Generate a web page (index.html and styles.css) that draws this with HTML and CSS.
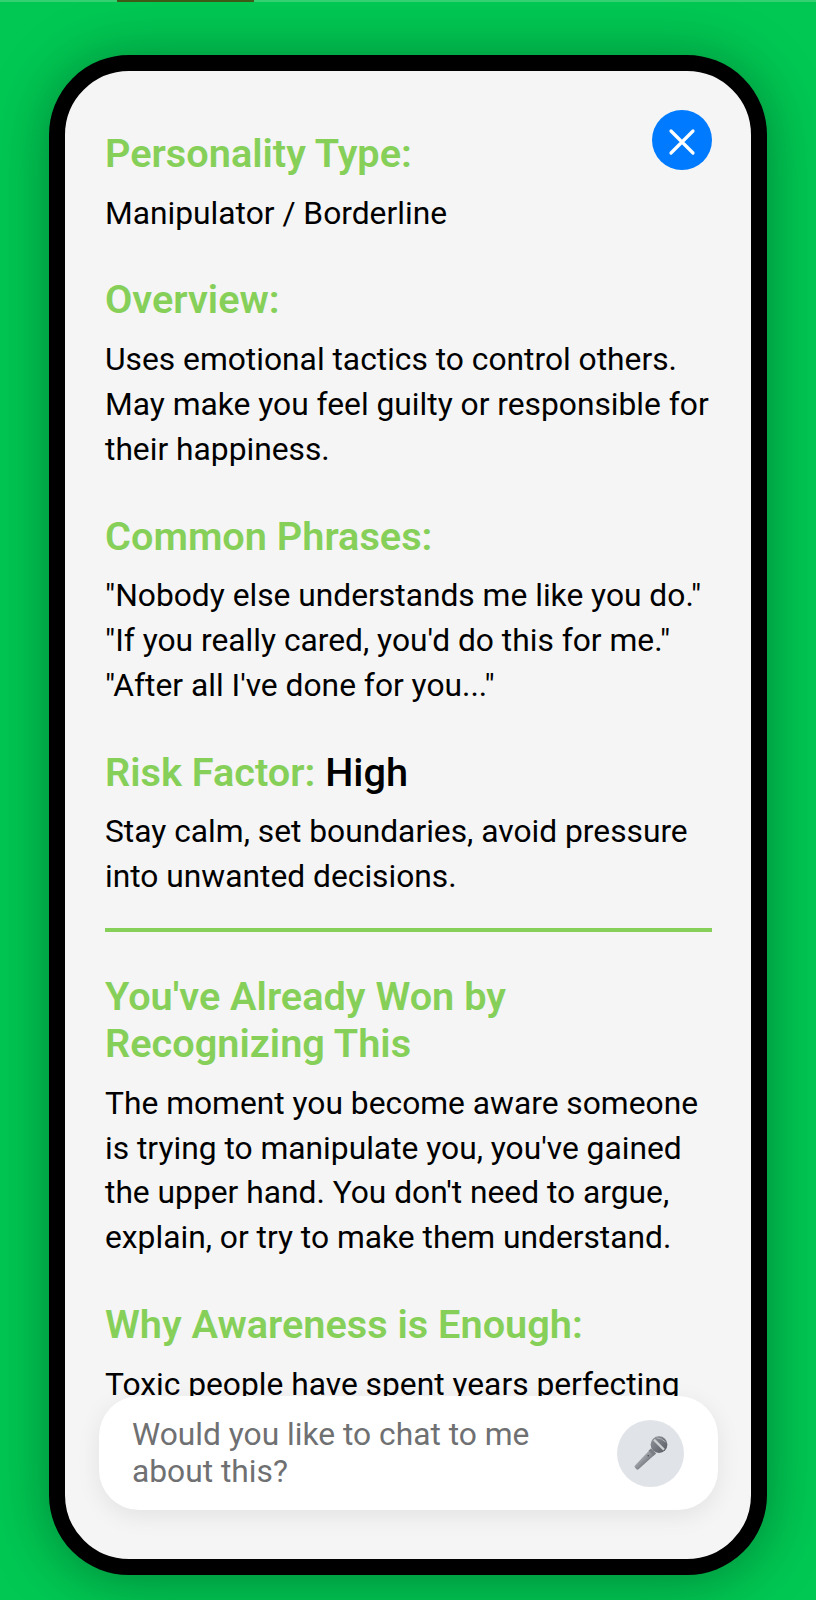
FILE: index.html
```html
<!DOCTYPE html>
<html lang="en">
<head>
<meta charset="utf-8">
<title>Personality Type</title>
<link rel="stylesheet" href="styles.css">
</head>
<body>
<div class="page">
  <div class="notch-line"><span class="notch"></span></div>
  <main class="phone">
    <div class="screen">
      <button class="close" aria-label="Close">
        <svg class="close-icon" viewBox="0 0 28 28" width="28" height="28"><path d="M3 3 L25 25 M25 3 L3 25" stroke="#fff" stroke-width="3.2" stroke-linecap="round" fill="none"/></svg>
      </button>
      <div class="scroll">
        <section class="block">
          <h2 class="head">Personality Type:</h2>
          <p class="text">Manipulator / Borderline</p>
        </section>
        <section class="block">
          <h2 class="head">Overview:</h2>
          <p class="text">Uses emotional tactics to control others. May make you feel guilty or responsible for their happiness.</p>
        </section>
        <section class="block">
          <h2 class="head">Common Phrases:</h2>
          <p class="text">"Nobody else understands me like you do."<br>"If you really cared, you'd do this for me."<br>"After all I've done for you..."</p>
        </section>
        <section class="block risk">
          <h2 class="head">Risk Factor: <span class="level">High</span></h2>
          <p class="text">Stay calm, set boundaries, avoid pressure into unwanted decisions.</p>
        </section>
        <hr class="rule">
        <section class="block">
          <h2 class="head narrow">You've Already Won by Recognizing This</h2>
          <p class="text">The moment you become aware someone is trying to manipulate you, you've gained the upper hand. You don't need to argue, explain, or try to make them understand.</p>
        </section>
        <section class="block">
          <h2 class="head">Why Awareness is Enough:</h2>
          <p class="text">Toxic people have spent years perfecting</p>
        </section>
      </div>
      <div class="chat">
        <p class="prompt">Would you like to chat to me about this?</p>
        <button class="mic" aria-label="Microphone">
          <svg viewBox="0 0 36 36" width="36" height="36">
            <defs>
              <linearGradient id="h" x1="0.2" y1="0.2" x2="0.75" y2="0.75"><stop offset="0" stop-color="#c2c4c8"/><stop offset="0.5" stop-color="#94979d"/><stop offset="1" stop-color="#63666c"/></linearGradient>
              <linearGradient id="b" x1="0" y1="0" x2="1" y2="1"><stop offset="0" stop-color="#94979e"/><stop offset="1" stop-color="#55585e"/></linearGradient>
            </defs>
            <path d="M18 13.5 L23 18.5 L5.5 34.2 Q4.4 35.2 3.2 34 L2 32.8 Q0.9 31.6 2 30.5 Z" fill="url(#h)"/>
            <path d="M18 13.5 L23 18.5 L20.5 20.8 L15.6 15.8 Z" fill="#7b7e84"/>
            <circle cx="15.2" cy="20.8" r="0.8" fill="#44464b"/>
            <circle cx="26" cy="9.6" r="8.4" fill="url(#b)"/>
            <path d="M21 4.6 L31 14.6" stroke="#cdcfd3" stroke-width="2.2" fill="none"/>
            <path d="M23.5 2.8 Q29 3.2 32.6 7" stroke="#b0b3b8" stroke-width="1" fill="none"/>
          </svg>
        </button>
      </div>
    </div>
  </main>
</div>
</body>
</html>
```
FILE: styles.css
```css
* { box-sizing: border-box; }
html, body { margin: 0; padding: 0; }
body { width: 816px; height: 1600px; overflow: hidden; font-family: Roboto, "Liberation Sans", sans-serif; }
.page {
  width: 816px; height: 1600px; position: relative;
  padding: 55px 49px 25px 49px;
  background: #00c853;
}
.notch-line { position: absolute; left: 0; right: 0; top: 0; height: 2px; background: #35d071; }
.notch { display: block; width: 137px; height: 2px; margin-left: 117px; background: #3f5a17; }
.phone {
  width: 718px; height: 1520px;
  border: 16px solid #000;
  border-radius: 80px;
  background: #f5f5f5;
  box-shadow: 0 4px 60px rgba(0,0,0,.35);
  overflow: hidden;
}
.screen { position: relative; height: 100%; overflow: hidden; }
.scroll { height: 100%; padding: 59px 39px 0 40px; overflow: hidden; }
.block { margin-bottom: 40px; }
.block.risk { margin-bottom: 28px; }
.head { margin: 0 0 14.5px 0; font-size: 39.7px; line-height: 47px; font-weight: 600; color: #86d05a; }
.head.narrow { width: 520px; }
.level { color: #000; font-weight: 500; }
.text { margin: 0; font-size: 31.75px; line-height: 44.9px; font-weight: 400; color: #000; }
.rule { height: 4px; margin: 0 0 41px; border: 0; background: #86d05a; }
.close {
  position: absolute; top: 39px; right: 39px; width: 60px; height: 60px; padding: 0;
  border: 0; border-radius: 50%; background: #007bff;
  display: flex; align-items: center; justify-content: center; z-index: 2;
}
.close-icon { margin-top: 3px; }
.chat {
  position: absolute; left: 34px; right: 33px; bottom: 49px; height: 114px;
  padding: 0 34px 0 33px; background: #fff; border-radius: 40px;
  box-shadow: 0 6px 24px rgba(0,0,0,.08);
  display: flex; align-items: center; justify-content: space-between;
}
.prompt { margin: 0; width: 420px; font-size: 31.75px; line-height: 37.5px; color: #6f7072; }
.mic {
  width: 67px; height: 67px; padding: 0; border: 0; border-radius: 50%;
  background: #e0e3e8; display: flex; align-items: center; justify-content: center; flex: none;
}
```
